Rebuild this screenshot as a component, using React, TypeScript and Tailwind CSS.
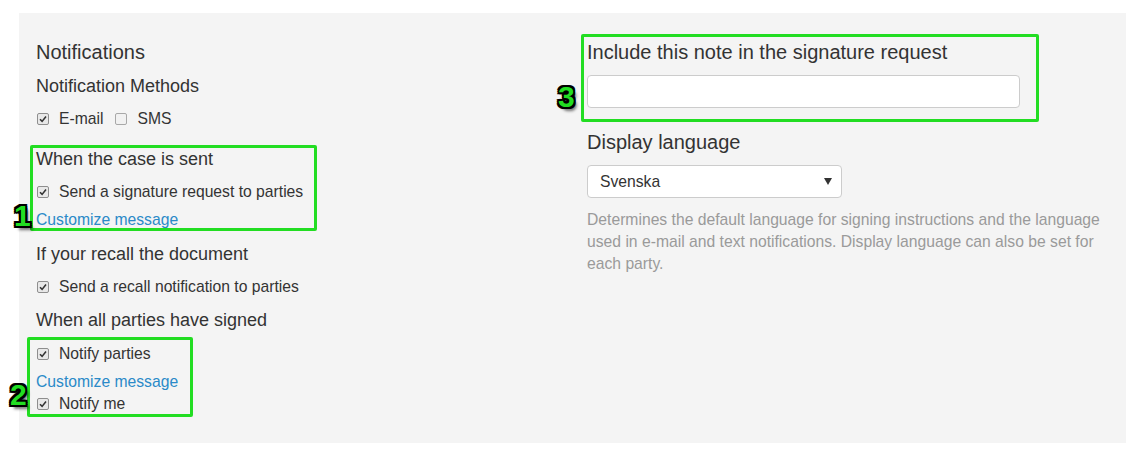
import type { ReactNode } from 'react';

const outline =
  '[text-shadow:-2px_-2px_0_#000,2px_-2px_0_#000,-2px_2px_0_#000,2px_2px_0_#000,0_-2px_0_#000,0_2px_0_#000,-2px_0_0_#000,2px_0_0_#000,3px_4px_3px_rgba(0,0,0,0.55)]';

function Check({ checked }: { checked?: boolean }) {
  return (
    <span
      className={`flex h-[12px] w-[12px] shrink-0 items-center justify-center rounded-[2px] border ${
        checked ? 'border-[#8e8e8e] bg-[#e8e8e8]' : 'border-[#a8a8a8] bg-[#f1f1f1]'
      }`}
    >
      {checked && (
        <svg width="8" height="8" viewBox="0 0 8 8">
          <path d="M1 4.3 L3.1 6.4 L7 1.6" fill="none" stroke="#333" strokeWidth="1.6" />
        </svg>
      )}
    </span>
  );
}

function CheckRow({ label, checked, className = '' }: { label: string; checked?: boolean; className?: string }) {
  return (
    <div className={`flex h-[22px] items-center gap-[10px] pl-[1px] ${className}`}>
      <Check checked={checked} />
      <span>{label}</span>
    </div>
  );
}

function Heading({ children, className = '' }: { children: ReactNode; className?: string }) {
  return <div className={`flex h-[22px] items-center text-[18px] ${className}`}>{children}</div>;
}

function Link({ className = '' }: { className?: string }) {
  return (
    <div className={`flex h-[22px] items-center text-[#2a8ac8] ${className}`}>
      <a href="#">Customize message</a>
    </div>
  );
}

function Badge({ n, className }: { n: string; className: string }) {
  return (
    <span className={`absolute text-[30px] font-bold leading-none text-[#22dd22] ${outline} ${className}`}>
      {n}
    </span>
  );
}

export default function App() {
  return (
    <div className="min-h-screen bg-white pt-[13px] pl-[19px] font-['Liberation_Sans',Arial,sans-serif] text-[15.7px] text-[#333]">
      <div className="flex h-[430px] w-[1107px] bg-[#f4f4f4] pl-[17px]">
        {/* Notification settings */}
        <div className="w-[551px] pt-[28px]">
          <div className="flex h-[22px] items-center text-[20px]">Notifications</div>
          <Heading className="mt-[12px]">Notification Methods</Heading>
          <div className="mt-[11px] flex items-center">
            <CheckRow label="E-mail" checked />
            <CheckRow label="SMS" className="ml-[11px]" />
          </div>

          <div className="relative mt-[18px]">
            <div className="pointer-events-none absolute -top-[3px] -left-[6px] h-[86px] w-[287px] rounded-[2px] border-[3px] border-[#22dd22]" />
            <Badge n="1" className="-left-[22px] top-[53px]" />
            <Heading>When the case is sent</Heading>
            <CheckRow label="Send a signature request to parties" checked className="mt-[11px]" />
            <Link className="mt-[6px]" />
          </div>

          <Heading className="mt-[12px]">If your recall the document</Heading>
          <CheckRow label="Send a recall notification to parties" checked className="mt-[11px]" />
          <Heading className="mt-[11px]">When all parties have signed</Heading>

          <div className="relative mt-[12px]">
            <div className="pointer-events-none absolute -top-[6px] -left-[9px] h-[80px] w-[166px] rounded-[2px] border-[3px] border-[#22dd22]" />
            <Badge n="2" className="-left-[26px] top-[37px]" />
            <CheckRow label="Notify parties" checked />
            <Link className="mt-[6px]" />
            <CheckRow label="Notify me" checked />
          </div>
        </div>

        {/* Request note and language */}
        <div className="w-[524px] pt-[28px]">
          <div className="relative">
            <div className="pointer-events-none absolute -top-[7px] -left-[6px] h-[88px] w-[458px] rounded-[2px] border-[3px] border-[#22dd22]" />
            <Badge n="3" className="-left-[29px] top-[41px]" />
            <Heading className="text-[20px]">Include this note in the signature request</Heading>
            <input
              type="text"
              className="mt-[12px] block h-[33px] w-[433px] rounded-[4px] border border-[#cccccc] bg-white px-3 outline-none"
            />
          </div>

          <Heading className="mt-[23px] text-[20px]">Display language</Heading>
          <div className="mt-[12px] flex h-[33px] w-[255px] items-center justify-between rounded-[4px] border border-[#cccccc] bg-white pr-[9px] pl-[12px]">
            <span>Svenska</span>
            <svg width="8" height="7" viewBox="0 0 8 7">
              <path d="M0 0 H8 L4 7 Z" fill="#333" />
            </svg>
          </div>
          <p className="mt-[11px] leading-[22px] text-[#9a9a9a]">
            Determines the default language for signing instructions and the language used in e-mail and text
            notifications. Display language can also be set for each party.
          </p>
        </div>
      </div>
    </div>
  );
}
